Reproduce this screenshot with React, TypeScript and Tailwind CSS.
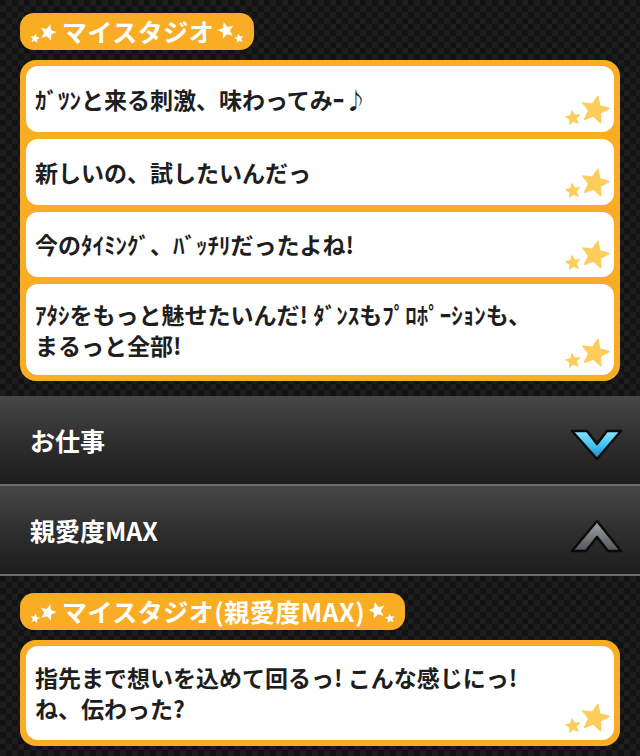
import React from 'react';

// star points for a 5-point star
const starPoints = (cx: number, cy: number, r: number, rot = 0) => {
  const pts: string[] = [];
  for (let i = 0; i < 10; i++) {
    const rad = i % 2 === 0 ? r : r * 0.45;
    const a = ((i * 36 + rot - 90) * Math.PI) / 180;
    pts.push(`${(cx + rad * Math.cos(a)).toFixed(2)},${(cy + rad * Math.sin(a)).toFixed(2)}`);
  }
  return pts.join(' ');
};

const SparklesLeft = () => (
  <svg width="30" height="30" viewBox="0 0 30 30" className="shrink-0">
    <polygon points={starPoints(5, 21.5, 5, 10)} fill="#fff" strokeLinejoin="round" />
    <polygon points={starPoints(18, 15.5, 8.5, 15)} fill="#fff" strokeLinejoin="round" />
  </svg>
);

const SparklesRight = () => (
  <svg width="30" height="30" viewBox="0 0 30 30" className="shrink-0">
    <polygon points={starPoints(12, 13.5, 8.5, -15)} fill="#fff" strokeLinejoin="round" />
    <polygon points={starPoints(25, 21.5, 5, -10)} fill="#fff" strokeLinejoin="round" />
  </svg>
);

const CardStars = () => (
  <svg width="50" height="34" viewBox="0 0 50 34" className="absolute right-[4px] bottom-[5px]">
    <polygon points={starPoints(35, 17, 14, 12)} fill="#ffcd5c" stroke="#ffcd5c" strokeWidth="1.5" strokeLinejoin="round" />
    <polygon points={starPoints(13, 25, 7.5, -8)} fill="#ffcd5c" stroke="#ffcd5c" strokeWidth="1" strokeLinejoin="round" />
  </svg>
);

const ChevronDown = () => (
  <svg width="56" height="36" viewBox="0 0 56 36" className="shrink-0 mt-[7px]">
    <defs>
      <linearGradient id="cyan" x1="0" y1="0" x2="0" y2="1">
        <stop offset="0" stopColor="#8ae6ff" />
        <stop offset="0.5" stopColor="#46c4ef" />
        <stop offset="1" stopColor="#1784c8" />
      </linearGradient>
    </defs>
    <polygon
      points="4,5 19,5 29,18 39,5 53,5 29,33"
      fill="url(#cyan)"
      stroke="#0b0b0b"
      strokeWidth="2.5"
      strokeLinejoin="round"
    />
  </svg>
);

const ChevronUp = () => (
  <svg width="56" height="36" viewBox="0 0 56 36" className="shrink-0 mt-[11px]">
    <defs>
      <linearGradient id="gray" x1="0" y1="0" x2="0" y2="1">
        <stop offset="0" stopColor="#a0a6ac" />
        <stop offset="1" stopColor="#50565c" />
      </linearGradient>
    </defs>
    <polygon
      points="4,33 29,3 53,33 40,33 29,19 18,33"
      fill="url(#gray)"
      stroke="#0b0b0b"
      strokeWidth="2.5"
      strokeLinejoin="round"
    />
  </svg>
);

const Badge = ({ text }: { text: string }) => (
  <div className="inline-flex items-center h-[37px] rounded-[14px] bg-[#f9ad25] pl-[10px] pr-[10px] self-start">
    <SparklesLeft />
    <span className="ml-[2px] text-[25px] leading-none font-bold text-white tracking-[0.5px]">{text}</span>
    <SparklesRight />
  </div>
);

const Card = ({ lines, h }: { lines: string[]; h: string }) => (
  <div className={`relative bg-white rounded-[12px] flex flex-col justify-center pl-[9px] ${h}`}>
    {lines.map((l, i) => (
      <p key={i} className="text-[23px] leading-[31px] font-bold text-[#1e1e1e] whitespace-nowrap">
        {l}
      </p>
    ))}
    <CardStars />
  </div>
);

const Bar = ({ label, children }: { label: string; children: React.ReactNode }) => (
  <div className="h-[90px] flex items-center justify-between pl-[30px] pr-[16px] bg-linear-to-b from-[#474747] via-[#2f2f2f] to-[#1d1d1d] border-b-2 border-[#6d6d6d]">
    <span className="text-[25px] font-bold text-white leading-none">{label}</span>
    {children}
  </div>
);

export default function App() {
  return (
    <div
      className="w-[640px] h-[756px] overflow-hidden flex flex-col bg-[#141414] bg-[image:conic-gradient(#1c1c1c_25%,#121212_0_50%,#1c1c1c_0_75%,#121212_0)] bg-[length:12px_12px]"
      style={{ fontFamily: '"Noto Sans CJK JP", "Noto Sans", sans-serif' }}
    >
      <div className="flex flex-col px-5 pt-[13px]">
        <Badge text="マイスタジオ" />
        <div className="mt-[10px] bg-[#f9ad25] rounded-[16px] p-[6px] flex flex-col gap-[7px]">
          <Card h="h-[66px]" lines={['ｶﾞﾂﾝと来る刺激、味わってみｰ♪']} />
          <Card h="h-[66px]" lines={['新しいの、試したいんだっ']} />
          <Card h="h-[65px]" lines={['今のﾀｲﾐﾝｸﾞ、ﾊﾞｯﾁﾘだったよね!']} />
          <Card h="h-[91px]" lines={['ｱﾀｼをもっと魅せたいんだ! ﾀﾞﾝｽもﾌﾟﾛﾎﾟｰｼｮﾝも、', 'まるっと全部!']} />
        </div>
      </div>

      <div className="mt-[15px] flex flex-col">
        <Bar label="お仕事">
          <ChevronDown />
        </Bar>
        <Bar label="親愛度MAX">
          <ChevronUp />
        </Bar>
      </div>

      <div className="flex flex-col px-5 pt-[17px]">
        <Badge text="マイスタジオ(親愛度MAX)" />
        <div className="mt-[10px] bg-[#f9ad25] rounded-[16px] p-[6px] flex flex-col">
          <Card h="h-[94px]" lines={['指先まで想いを込めて回るっ! こんな感じにっ!', 'ね、伝わった?']} />
        </div>
      </div>
    </div>
  );
}
